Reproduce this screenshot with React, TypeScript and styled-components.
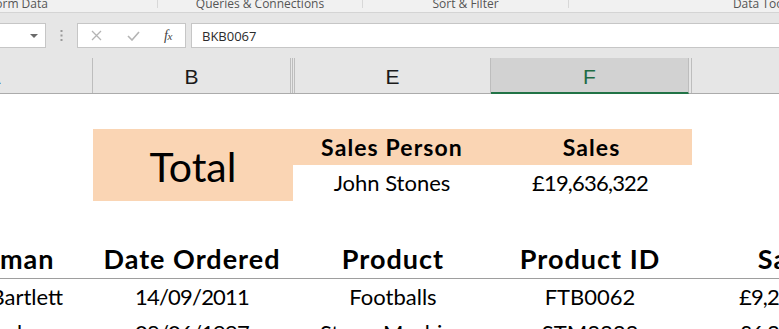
import * as React from 'react';
import styled, { createGlobalStyle } from 'styled-components';

const GlobalStyle = createGlobalStyle`
body {
  margin: 0;
  background: #ffffff;
  overflow: hidden;
}
`;

const Page = styled.div`
width: 779px;
height: 329px;
overflow: hidden;
position: relative;
`;

// ribbon group labels (only the bottom strip of the ribbon shows)
const RibbonLabels = styled.div`
display: flex;
height: 12px;
background: #f1f1f1;
border-bottom: 1px solid #d4d4d4;
margin-left: -120px;
overflow: hidden;
`;

const RibbonGroup = styled.div<{ $w: number }>`
flex: 0 0 ${p => p.$w}px;
box-sizing: border-box;
border-right: 1px solid #d8d8d8;
height: 8px;
display: flex;
justify-content: center;
align-items: flex-start;
white-space: nowrap;

span {
  font: 12px "Open Sans", sans-serif;
  color: #555;
  line-height: 12px;
  margin-top: -2px;
}
`;

const Band = styled.div`
background: #e6e6e6;
padding-top: 10px;
`;

const FormulaRow = styled.div`
display: flex;
align-items: stretch;
height: 25px;
`;

const NameBox = styled.div`
box-sizing: border-box;
width: 48px;
margin-left: -2px;
background: #fff;
border: 1px solid #c6c6c6;
position: relative;
`;

const DropArrow = styled.div`
position: absolute;
right: 7px;
top: 10px;
width: 0;
height: 0;
border-left: 4px solid transparent;
border-right: 4px solid transparent;
border-top: 4px solid #6a6a6a;
`;

const Grip = styled.div`
width: 31px;
display: flex;
justify-content: center;
align-items: center;
svg { display: block; }
`;

const FxBox = styled.div`
box-sizing: border-box;
width: 109px;
background: #fff;
border: 1px solid #c6c6c6;
display: flex;
align-items: center;
padding-left: 12px;
`;

const FxButton = styled.div<{ $w: number }>`
width: ${p => p.$w}px;
display: flex;
justify-content: center;
align-items: center;
svg { display: block; }
`;

const FxLabel = styled.span`
font: italic 14px "Liberation Serif", serif;
color: #3f3f3f;
letter-spacing: -0.5px;

sub {
  font-size: 11px;
  vertical-align: baseline;
}
`;

const FormulaInput = styled.div`
box-sizing: border-box;
flex: 1;
margin-left: 5px;
background: #fff;
border: 1px solid #c6c6c6;
border-right: none;
padding-left: 10px;
display: flex;
align-items: center;
font: 13px "Open Sans", sans-serif;
color: #2b2b2b;
`;

const cols = '198px 198px 2px 2px 196px 198px 3px 198px';

const ColHeaderRow = styled.div`
margin-top: 10px;
display: grid;
grid-template-columns: ${cols};
margin-left: -105px;
height: 35px;
border-bottom: 1px solid #ababab;
`;

const ColHeader = styled.div<{ $selected?: boolean }>`
box-sizing: border-box;
border-right: 1px solid #bdbdbd;
display: flex;
justify-content: center;
align-items: center;
font: 21px "Liberation Sans", Arial, sans-serif;
color: ${p => (p.$selected ? '#1f6b44' : '#1a1a1a')};
background: ${p => (p.$selected ? '#d2d2d2' : 'transparent')};
border-bottom: ${p => (p.$selected ? '2px solid #217346' : 'none')};
margin-bottom: ${p => (p.$selected ? '-1px' : '0')};
padding-top: 3px;
`;

const Sheet = styled.div`
display: grid;
grid-template-columns: ${cols};
grid-template-rows: 35px 36px 36px 36px 42px 36px 36px;
margin-left: -105px;
font-family: Lato, "Open Sans", sans-serif;
color: #000;
`;

const Cell = styled.div<{ $col: number; $row: number; $span?: number; $rows?: number; $fill?: boolean }>`
grid-column: ${p => p.$col} / span ${p => p.$span || 1};
grid-row: ${p => p.$row} / span ${p => p.$rows || 1};
background: ${p => (p.$fill ? '#fad5b4' : 'transparent')};
display: flex;
justify-content: center;
align-items: flex-end;
white-space: nowrap;
overflow: visible;
padding-bottom: 4px;
box-sizing: border-box;
min-width: 0;
`;

const TotalCell = styled(Cell)`
align-items: center;
padding-bottom: 0;
`;

const BigTotal = styled.span`
font-size: 41px;
line-height: 72px;
margin-bottom: -3px;
`;

const SubHead = styled.span`
font-size: 23px;
font-weight: 700;
line-height: 28px;
letter-spacing: 1.1px;
`;

const Value = styled.span<{ $tight?: boolean }>`
font-size: 22px;
line-height: 28px;
letter-spacing: ${p => (p.$tight ? '-0.8px' : '0')};
`;

const TableHead = styled.span`
font-size: 27px;
font-weight: 700;
line-height: 32px;
letter-spacing: 1px;
`;

const HeaderLine = styled.div`
grid-column: 1 / -1;
grid-row: 5;
align-self: end;
height: 1px;
background: #9e9e9e;
`;

const rows = [
  ['Simon Bartlett', '14/09/2011', 'Footballs', 'FTB0062', '£9,245,810'],
  ['Sam Lindsay', '08/06/1997', 'Stress Machine', 'STM3333', '£6,332,150'],
];

// grid column index for each data column, and which of them hold figures
const dataCols = [1, 2, 5, 6, 8];
const tightCols = [false, true, false, false, true];

export default function App() {
  return (
    <Page>
      <GlobalStyle />
      <RibbonLabels>
        <RibbonGroup $w={278}><span>Form Data</span></RibbonGroup>
        <RibbonGroup $w={205}><span>Queries &amp; Connections</span></RibbonGroup>
        <RibbonGroup $w={206}><span>Sort &amp; Filter</span></RibbonGroup>
        <RibbonGroup $w={388}><span>Data Tools</span></RibbonGroup>
      </RibbonLabels>
      <Band>
        <FormulaRow>
          <NameBox><DropArrow /></NameBox>
          <Grip>
            <svg width="3" height="11" viewBox="0 0 3 11">
              <rect x="0.5" y="0" width="2" height="2" fill="#9a9a9a" />
              <rect x="0.5" y="4.5" width="2" height="2" fill="#9a9a9a" />
              <rect x="0.5" y="9" width="2" height="2" fill="#9a9a9a" />
            </svg>
          </Grip>
          <FxBox>
            <FxButton $w={12}>
              <svg width="11" height="11" viewBox="0 0 11 11">
                <path d="M1 1 L10 10 M10 1 L1 10" stroke="#b4b4b4" strokeWidth="1.3" fill="none" />
              </svg>
            </FxButton>
            <FxButton $w={62}>
              <svg width="13" height="10" viewBox="0 0 13 10">
                <path d="M1 5 L5 9 L12 1" stroke="#b4b4b4" strokeWidth="1.6" fill="none" />
              </svg>
            </FxButton>
            <FxButton $w={8}><FxLabel>f<sub>x</sub></FxLabel></FxButton>
          </FxBox>
          <FormulaInput>BKB0067</FormulaInput>
        </FormulaRow>
        <ColHeaderRow>
          <ColHeader>A</ColHeader>
          <ColHeader>B</ColHeader>
          <ColHeader />
          <ColHeader />
          <ColHeader>E</ColHeader>
          <ColHeader $selected>F</ColHeader>
          <ColHeader />
          <ColHeader>G</ColHeader>
        </ColHeaderRow>
      </Band>
      <Sheet>
        <TotalCell $col={2} $row={2} $span={2} $rows={2} $fill>
          <BigTotal>Total</BigTotal>
        </TotalCell>
        <Cell $col={4} $row={2} $span={2} $fill><SubHead>Sales Person</SubHead></Cell>
        <Cell $col={6} $row={2} $span={2} $fill><SubHead>Sales</SubHead></Cell>
        <Cell $col={4} $row={3} $span={2}><Value>John Stones</Value></Cell>
        <Cell $col={6} $row={3}><Value $tight>£19,636,322</Value></Cell>

        <Cell $col={1} $row={5}><TableHead>Salesman</TableHead></Cell>
        <Cell $col={2} $row={5}><TableHead>Date Ordered</TableHead></Cell>
        <Cell $col={5} $row={5}><TableHead>Product</TableHead></Cell>
        <Cell $col={6} $row={5}><TableHead>Product ID</TableHead></Cell>
        <Cell $col={8} $row={5}><TableHead>Sales</TableHead></Cell>
        <HeaderLine />

        {rows.map((r, i) =>
          r.map((v, j) => (
            <Cell key={i + '-' + j} $col={dataCols[j]} $row={6 + i}>
              <Value $tight={tightCols[j]}>{v}</Value>
            </Cell>
          ))
        )}
      </Sheet>
    </Page>
  );
}
